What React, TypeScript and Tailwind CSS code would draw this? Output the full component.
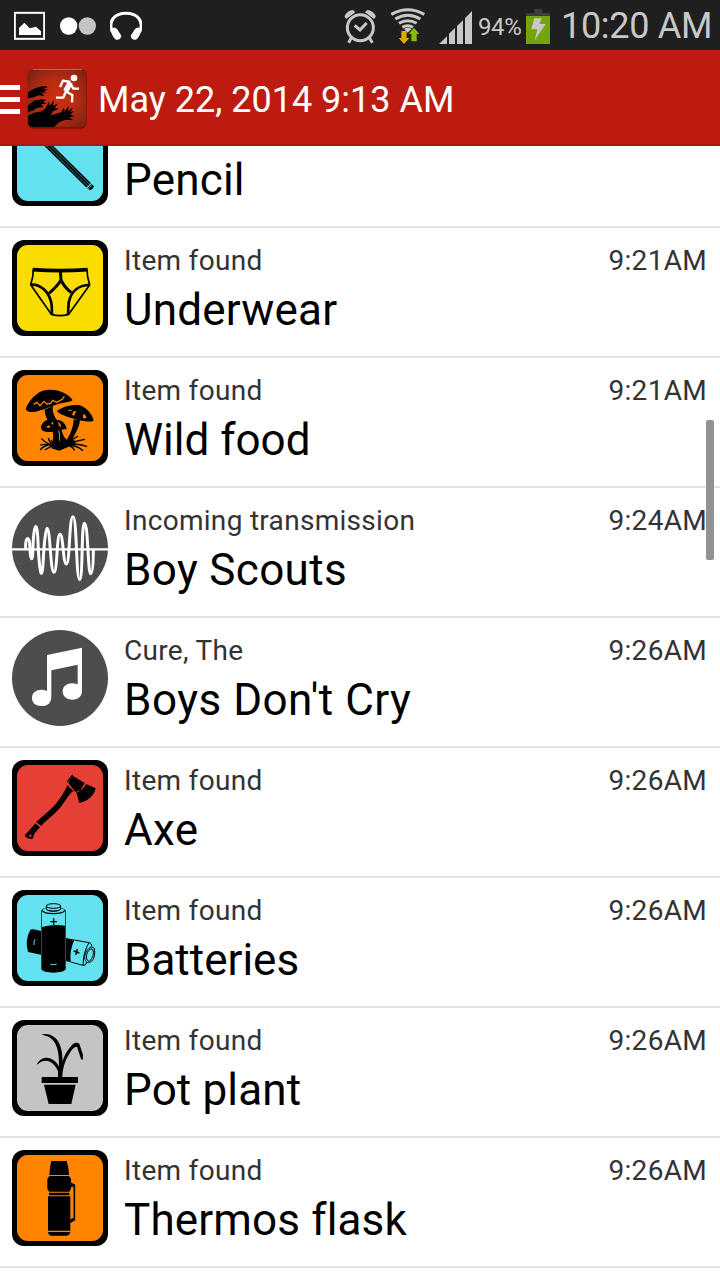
import type { ReactNode } from "react";

interface Entry {
 label?: string;
 title: string;
 time?: string;
 tracking?: string;
 icon: ReactNode;
}

interface TileProps {
 fill: string;
 children: ReactNode;
}

// Item artwork is drawn on a 288 unit canvas whose origin is 36, 30
function Tile({ fill, children }: TileProps) {
 return (
  <svg viewBox="36 30 288 288" className="block size-24 shrink-0">
   <rect x="36" y="30" width="288" height="288" rx="36" fill="#000" />
   <rect x="51" y="45" width="258" height="258" rx="33" fill={fill} />
   {children}
  </svg>
 );
}

function Disc({ children }: { children: ReactNode }) {
 return (
  <svg viewBox="36 30 288 288" className="block size-24 shrink-0">
   <circle cx="180" cy="174" r="144" fill="#4d4d4d" />
   {children}
  </svg>
 );
}

function PencilIcon() {
 return (
  <Tile fill="#63e1ef">
   <path d="M98 103 L260 263 L273 250 L111 90 Z" fill="#000" />
   <path d="M102 99 L264 259 M107 94 L269 254" stroke="#63e1ef" strokeWidth="1.7" />
   <path d="M262 265 l13 -13 l7 7 q-3 9 -12 12 z" fill="#000" />
   <path d="M259 264 l14 -14 M263 268 l14 -14" stroke="#63e1ef" strokeWidth="1.8" />
  </Tile>
 );
}

function UnderwearIcon() {
 return (
  <Tile fill="#fadd00">
   <g fill="none" stroke="#000" strokeLinejoin="round">
    <path d="M98 119 Q180 125 263 119" strokeWidth="11" />
    <path d="M100 118 L98 141 L92 164 L154 253 Q180 261 206 253 L269 165 L263 141 L261 119" strokeWidth="5" />
    <path d="M92 164 C124 161 149 188 155 224 L156 253" strokeWidth="8" />
    <path d="M269 165 C236 165 213 184 206 218 L204 253" strokeWidth="8" />
    <path d="M181 124 L183 150 M147 190 Q172 169 183 150 Q194 173 214 188" strokeWidth="9" />
   </g>
  </Tile>
 );
}

function MushroomIcon() {
 return (
  <Tile fill="#ff8500">
   <path d="M77 146 C88 122 109 94 139 90 C171 85 205 101 218 120 C214 127 189 126 168 134 C140 144 111 157 93 156 Q79 154 77 146Z" />
   <path d="M170 153 C190 139 216 132 239 136 C260 142 278 165 281 182 Q270 187 252 183 C228 179 193 170 177 159Z" />
   <path d="M123 203 C124 189 136 178 153 178 L176 180 C190 183 199 196 200 207 L178 210 C153 219 126 219 123 203Z" />
   <path d="M134 149 L159 137 C155 157 166 176 178 189 C186 209 187 230 200 239 C210 226 220 202 221 178 L240 181 C237 208 221 226 219 237 L228 248 L213 257 L178 272 L154 265 L158 249 C162 225 159 209 150 190 C139 176 134 163 134 149Z" />
   <path d="M101 133 L111 127 L120 137 L132 124 L141 132 L152 130 L158 121 L170 127 L187 118 L193 109" stroke="#ff8500" strokeWidth="4" fill="none" />
   <path d="M203 149 l14 1 l-8 4z M216 164 l5 -10 l8 -1 l-7 14z M249 165 l5 -3 l6 12 l-11 1z M139 202 q3 -8 13 -4 l-5 6z M153 191 l7 -7 l-1 10z M174 185 q10 7 9 17 l-7 -6z" fill="#ff8500" />
   <path d="M176 211 Q181 224 178 242" stroke="#ff8500" strokeWidth="3" fill="none" />
   <path d="M120 270 Q136 251 164 255 M124 235 Q135 248 156 255 M145 234 Q148 249 164 257 M153 240 L164 254 M121 255 Q143 249 174 262 M134 270 L159 256 M198 255 Q229 254 249 272 M208 252 Q240 251 261 260 M208 248 L255 238 M207 245 L234 228 M203 255 Q221 261 223 272" stroke="#000" strokeWidth="4" fill="none" />
  </Tile>
 );
}

function TransmissionIcon() {
 return (
  <Disc>
   <path d="M36 178 H324" stroke="#fff" strokeWidth="7" />
   <path
    d="M77 178 C75 140 87 138 89 160 C90 216 99 223 99 168 C102 92 112 92 114 158 C117 225 124 286 129 224 C131 181 136 115 141 115 C151 115 151 247 162 247 C172 247 170 133 180 133 C190 133 189 222 199 222 C210 222 207 80 219 80 C231 80 228 269 239 269 C249 269 244 100 253 100 C265 100 263 251 272 251 C279 251 280 209 280 178"
    fill="none"
    stroke="#fff"
    strokeWidth="9"
   />
  </Disc>
 );
}

function MusicIcon() {
 return (
  <Disc>
   <path d="M141 105 L246 83 V211 C246 230 235 239 217 239 C199 239 188 229 188 214 C188 193 211 184 233 193 V134 L154 151 V230 C154 248 143 258 125 258 C107 258 96 249 96 234 C96 213 119 204 141 213Z" fill="#fff" />
  </Disc>
 );
}

function AxeIcon() {
 return (
  <Tile fill="#e63f36">
   <path d="M202 105 C193 128 174 157 155 175 C139 190 122 204 109 216 L123 228 C139 211 159 197 176 178 C195 157 204 134 220 123Z" />
   <path d="M106 220 L120 232 L103 251 L98 267 Q84 269 74 258 Q74 254 83 247Z" />
   <path d="M218 77 L254 99 L242 120 L226 126 L205 99Z M258 102 L287 115 C282 137 263 154 238 159 L229 127 Q249 122 258 102Z" />
   <path d="M202 96 L218 75" stroke="#000" strokeWidth="4" />
   <circle cx="91" cy="257" r="3.5" fill="#e63f36" />
  </Tile>
 );
}

function BatteriesIcon() {
 return (
  <Tile fill="#63e1ef">
   <path d="M91 149 Q98 145 123 153 V224 L84 216 Q74 180 91 149Z" />
   <path d="M105 178 Q101 184 102 195" stroke="#63e1ef" strokeWidth="3" fill="none" />
   <path d="M198 174 L223 179 Q208 212 212 246 L198 244Z" />
   <g fill="none" stroke="#000" strokeWidth="3">
    <path d="M223 180 L267 188 Q277 190 274 200 M212 246 L249 256 Q257 258 260 247" />
    <path d="M267 188 Q249 218 249 256 M275 201 C252 207 248 247 264 248 M275 201 Q285 201 284 213 C285 231 279 244 269 247 L262 247" />
    <path d="M276 207 C260 205 254 239 265 243 M276 207 C286 216 276 244 265 243" />
   </g>
   <path d="M221 213 L238 219 M232 207 L227 225" stroke="#000" strokeWidth="4" />
   <path d="M124 91 V268 Q130 278 160 278 Q191 278 197 268 V91 Q185 79 160 80 Q135 79 124 91Z" />
   <path d="M126 94 Q132 103 160 103 Q188 103 195 94 V137 Q160 131 126 141Z" fill="#63e1ef" />
   <path d="M127 90 Q134 83 145 83 Q139 87 143 92 Q160 98 178 92 Q182 87 176 83 Q188 84 194 90 Q188 99 160 99 Q133 99 127 90Z" fill="#63e1ef" />
   <path d="M139 78 V88 Q143 93 160 93 Q178 93 182 88 V78" fill="#63e1ef" stroke="#000" strokeWidth="3" />
   <ellipse cx="160.5" cy="78" rx="21.5" ry="7" fill="#63e1ef" stroke="#000" strokeWidth="3" />
   <path d="M151 125 H171 M161 115 V135" stroke="#000" strokeWidth="4" />
   <path d="M151 253 Q160 255 170 253" stroke="#63e1ef" strokeWidth="3" fill="none" />
  </Tile>
 );
}

function PlantIcon() {
 return (
  <Tile fill="#c4c4c4">
   <path d="M125 73 C151 68 173 83 181 108 C187 126 188 144 187 157 C192 135 206 115 220 101 Q229 96 238 101 L249 135 L248 150 L243 147 L231 110 Q224 109 215 120 C199 143 188 168 187 201 H174 V183 C163 158 138 139 113 163 L110 163 C119 147 134 139 150 145 Q168 152 177 170 C178 130 173 84 132 76Z" />
   <path d="M125 201 H234 V219 H125Z M132 224 H227 L214 282 H146Z" />
  </Tile>
 );
}

function FlaskIcon() {
 return (
  <Tile fill="#ff8500">
   <path d="M154 63 H200 Q206 81 207 105 H148 Q149 80 154 63Z M148 108 H207 L213 116 V146 L208 155 H147 L142 146 V116Z M147 158 H208 V166 H147Z M144 169 H211 V272 H144Z M144 276 H211 Q209 287 199 287 H155 Q145 287 144 276Z" />
   <path d="M211 130 L223 136 V239 L211 246" fill="none" stroke="#000" strokeWidth="5" />
   <path d="M211 127 L224 134 L218 141 H211Z M211 238 L218 234 L224 240 L211 249Z" />
  </Tile>
 );
}

const ENTRIES: Entry[] = [
 { title: "Pencil", tracking: "tracking-[0.2px]", icon: <PencilIcon /> },
 { label: "Item found", title: "Underwear", time: "9:21AM", tracking: "tracking-[0.2px]", icon: <UnderwearIcon /> },
 { label: "Item found", title: "Wild food", time: "9:21AM", icon: <MushroomIcon /> },
 { label: "Incoming transmission", title: "Boy Scouts", time: "9:24AM", tracking: "tracking-[0.35px]", icon: <TransmissionIcon /> },
 { label: "Cure, The", title: "Boys Don't Cry", time: "9:26AM", tracking: "tracking-[0.5px]", icon: <MusicIcon /> },
 { label: "Item found", title: "Axe", time: "9:26AM", tracking: "tracking-[0.3px]", icon: <AxeIcon /> },
 { label: "Item found", title: "Batteries", time: "9:26AM", icon: <BatteriesIcon /> },
 { label: "Item found", title: "Pot plant", time: "9:26AM", tracking: "tracking-[0.15px]", icon: <PlantIcon /> },
 { label: "Item found", title: "Thermos flask", time: "9:26AM", tracking: "tracking-[0.15px]", icon: <FlaskIcon /> },
];

function StatusBar() {
 return (
  <div className="flex h-[50px] shrink-0 items-start justify-between bg-[#1f1f1f] pr-2 pl-[14px] text-[#c8c8c8]">
   <div className="flex">
    <svg viewBox="42 0 93 150" className="h-[50px] w-[31px]">
     <rect x="44.5" y="38.5" width="88" height="78" fill="none" stroke="#fff" strokeWidth="6" />
     <path d="M57 105 V84 L73 68 L89 85 L108 80 L123 94 V105Z" fill="#fff" />
    </svg>
    <svg viewBox="180 0 108 150" className="ml-[15px] h-[50px] w-9">
     <circle cx="206" cy="78" r="26" fill="#fff" />
     <circle cx="262" cy="78" r="26" fill="#c4c4c4" />
    </svg>
    <svg viewBox="330 0 96 150" className="ml-[14px] h-[50px] w-8">
     <path d="M337 96 C323 63 344 40 378 40 C412 40 433 63 419 96" fill="none" stroke="#fff" strokeWidth="9" />
     <path d="M332 87 Q342 78 351 87 L364 107 Q362 121 348 119 Q335 110 332 87Z M424 87 Q414 78 405 87 L392 107 Q394 121 408 119 Q421 110 424 87Z" fill="#fff" />
    </svg>
   </div>
   <div className="flex">
    <svg viewBox="42 0 96 150" className="h-[50px] w-8">
     <circle cx="91" cy="83" r="39" fill="none" stroke="currentColor" strokeWidth="9" />
     <path d="M74 76 L90 90 L110 69" fill="none" stroke="currentColor" strokeWidth="9" />
     <path d="M43 49 Q52 31 69 30 L76 37 L49 57Z M138 49 Q129 31 112 30 L105 37 L132 57Z" fill="currentColor" />
     <path d="M63 115 L56 128 M119 115 L127 128" stroke="currentColor" strokeWidth="9" />
    </svg>
    <svg viewBox="180 0 108 150" className="ml-[14px] h-[50px] w-9">
     <g fill="none" stroke="currentColor" strokeWidth="9">
      <path d="M184 43 Q233 15 283 43" />
      <path d="M196 57 Q233 34 271 57" />
      <path d="M207 70 Q233 54 260 70" />
      <path d="M217 82 Q233 72 249 82" />
     </g>
     <path d="M222 87 Q233 80 245 87 L233 98Z" fill="currentColor" />
     <path d="M214 93 H230 V114 H238 L222 132 L206 114 H214Z" fill="#dca900" />
     <path d="M244 124 V102 H236 L252 83 L268 102 H260 V124Z" fill="#84bd00" />
    </svg>
    <svg viewBox="327 0 99 150" className="ml-[13px] h-[50px] w-[33px]">
     <path d="M327 132 L351 109 V132Z M357 132 V101 L375 84 V132Z M381 132 V78 L399 61 V132Z M405 132 V55 L426 33 V132Z" fill="currentColor" />
    </svg>
    <span className="ml-[6px] w-[48px] pt-[10px] text-[24px] leading-[34px] tracking-[-0.4px]">94%</span>
    <svg viewBox="588 0 72 150" className="h-[50px] w-6">
     <path d="M612 27 H636 V39 H660 V49 H588 V39 H612Z" fill="#3c3c3c" />
     <path d="M588 48 H660 V132 H588Z" fill="#72a50c" />
     <path d="M613 55 H635 L628 72 H647 L614 120 L622 88 H604Z" fill="currentColor" />
    </svg>
    <span className="ml-[11px] w-[151px] pt-px text-[36px] leading-[50px] tracking-[-0.3px] whitespace-nowrap">10:20 AM</span>
   </div>
  </div>
 );
}

function AppIcon() {
 return (
  <svg viewBox="81 203 180 183" className="ml-[7px] h-[61px] w-[60px]">
   <defs>
    <radialGradient id="glow" r="0.65">
     <stop offset="0" stopColor="#cb3012" />
     <stop offset="0.5" stopColor="#b82b12" />
     <stop offset="1" stopColor="#7c2212" />
    </radialGradient>
    <clipPath id="plate">
     <rect x="84" y="206" width="175" height="175" rx="15" />
    </clipPath>
   </defs>
   <rect x="83" y="208" width="177" height="177" rx="16" fill="#791208" />
   <g clipPath="url(#plate)">
    <rect x="84" y="206" width="175" height="175" fill="url(#glow)" />
    <path d="M84 276 L101 266 L118 259 L137 257 L143 261 L129 265 L144 268 L131 272 L141 279 L124 276 L133 287 L117 285 L100 291 L84 293Z M84 316 L101 301 L124 297 L139 299 L129 304 L140 310 L123 311 L130 320 L112 322 L101 330 L84 335Z M84 347 L101 338 L125 333 L137 324 L147 303 L149 317 L162 299 L159 317 L174 309 L164 323 L176 325 L159 333 L152 345 L169 340 L184 336 L191 322 L194 333 L206 318 L204 333 L219 321 L211 335 L222 333 L211 343 L225 348 L207 351 L220 360 L198 358 L178 365 L161 381 H84Z" />
   </g>
   <path d="M98 207.5 H246" stroke="#e37b6d" strokeWidth="2" />
   <circle cx="222" cy="233" r="10" fill="#fff" />
   <g fill="none" stroke="#fff" strokeLinejoin="round">
    <path d="M180 260 L189 241 L211 245" strokeWidth="7" />
    <path d="M211 246 L197 273" strokeWidth="16" />
    <path d="M211 250 L220 265 H237 M199 274 L217 284 L216 306 M198 272 L190 292 H168" strokeWidth="7" />
   </g>
  </svg>
 );
}

function Header() {
 return (
  <header className="flex h-24 shrink-0 items-center border-b-2 border-[#a81911] bg-[#bd1b10] pt-[2px] text-white">
   <div className="mt-[3px] flex w-5 flex-col gap-[7px]">
    <div className="h-[5px] bg-white" />
    <div className="h-[5px] bg-white" />
    <div className="h-[5px] bg-white" />
   </div>
   <AppIcon />
   <h1 className="ml-[11px] pt-1 text-[36px] leading-[44px] whitespace-nowrap">May 22, 2014 9:13 AM</h1>
  </header>
 );
}

function Row({ label, title, time, tracking, icon }: Entry) {
 return (
  <li className="flex h-[130px] items-start border-b-2 border-[#e3e3e3] px-3 pt-3">
   {icon}
   <div className="ml-4 grow pt-[3px]">
    <div className="flex h-9 justify-between pr-px text-[28px] leading-9 tracking-[0.3px] text-[#333]">
     <span>{label}</span>
     <span>{time}</span>
    </div>
    <h2 className={`mt-[3px] text-[44px] leading-[56px] text-black ${tracking ?? ""}`}>{title}</h2>
   </div>
  </li>
 );
}

export default function App() {
 return (
  <div className="relative flex h-[1280px] w-[720px] flex-col overflow-hidden bg-white font-['Roboto',sans-serif]">
   <StatusBar />
   <Header />
   <main className="grow overflow-hidden">
    {/* the list is scrolled part way into its first row */}
    <ul className="-mt-12">
     {ENTRIES.map((entry) => (
      <Row key={entry.title} {...entry} />
     ))}
    </ul>
   </main>
   <div className="absolute top-[420px] right-[6px] h-[140px] w-2 rounded-[2px] bg-[#929292]" />
  </div>
 );
}
